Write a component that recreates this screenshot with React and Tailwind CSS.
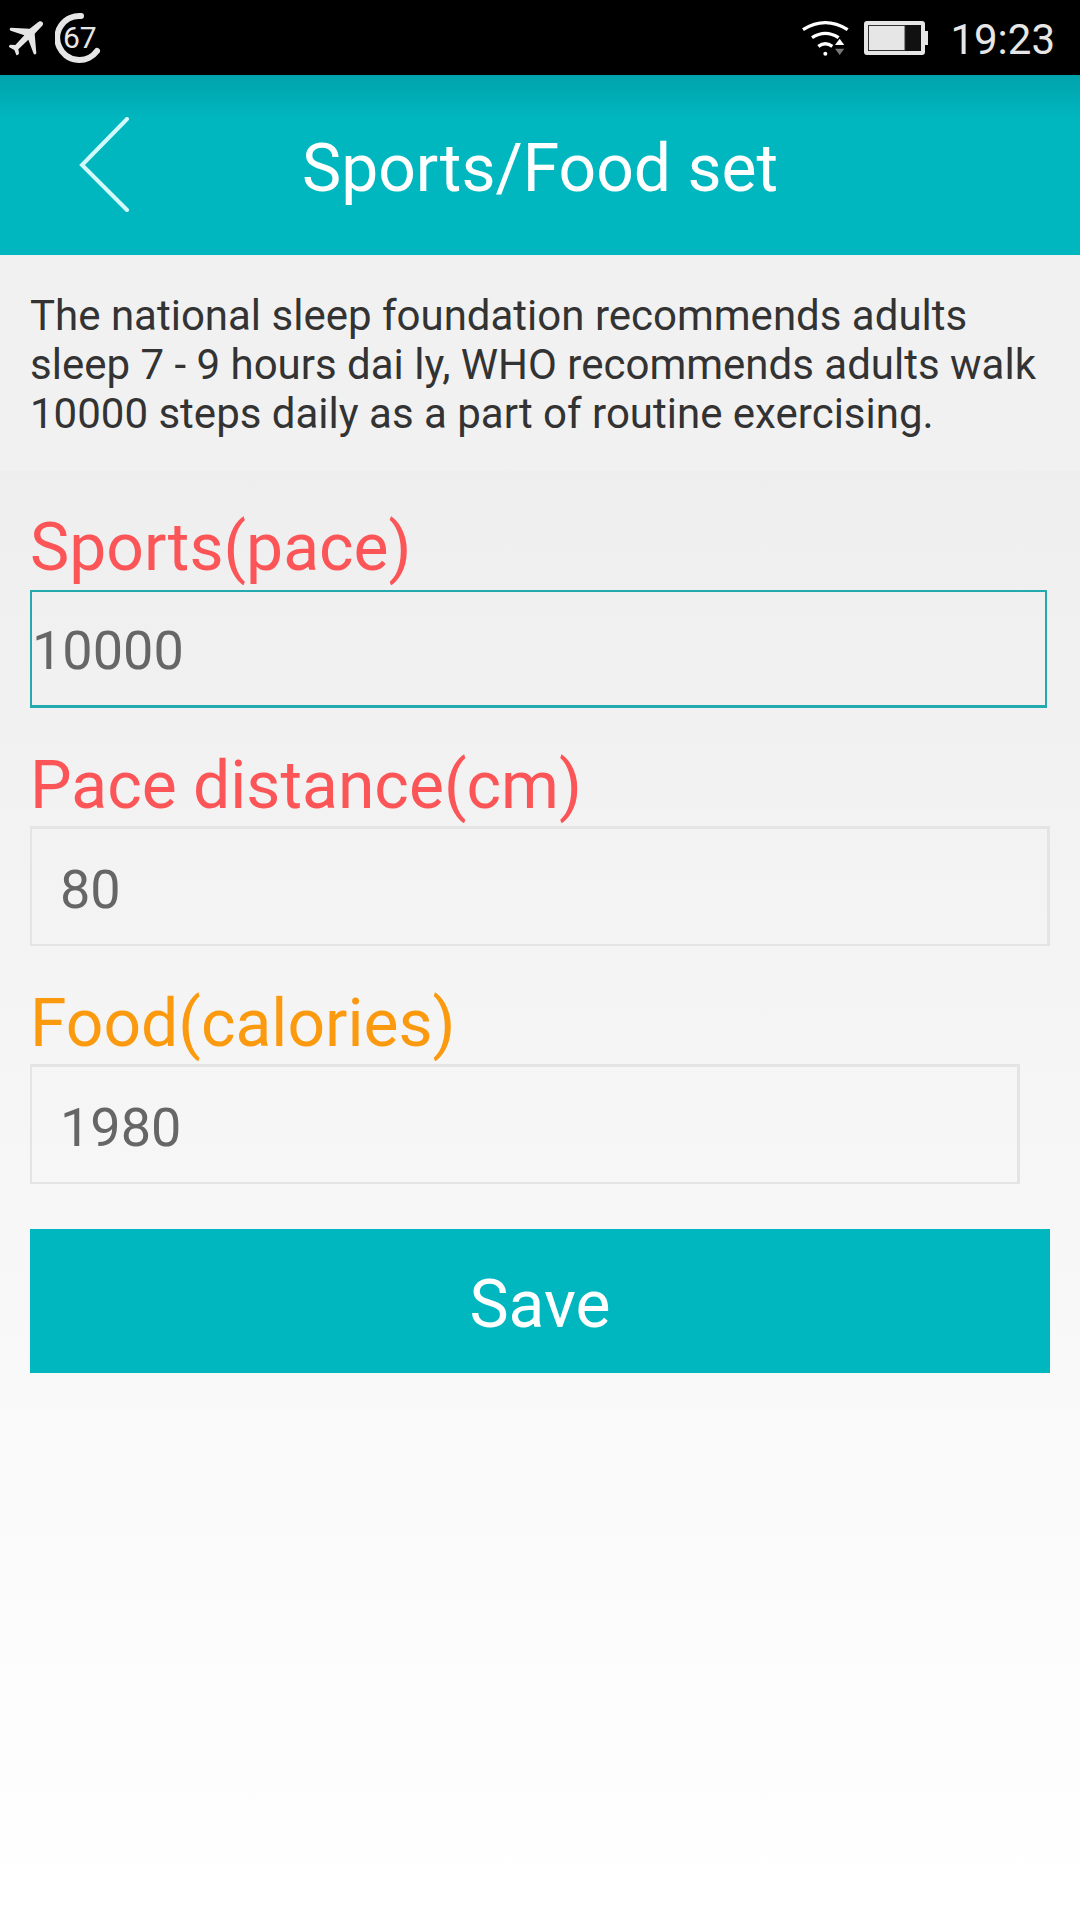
import React from "react";

function StatusBar() {
  return (
    <div className="flex h-[75px] items-center justify-between bg-black pl-2 pr-[25px] text-[#e6e6e6]">
      <div className="flex h-full items-center">
        <svg viewBox="0 0 108 108" className="mr-[11px] h-9 w-9" fill="currentColor" aria-label="Airplane mode">
          <path d="M103 6c4 4 2 9-1 12L80 41l5 58c0 4-6 6-8 2L61 59 31 88l2 12c0 3-6 7-8 5l-6-15L4 82c-3-2 0-7 3-8l15 1 27-29L8 32c-4-2-4-8 1-9l56 3L90 7c3-3 9-5 13-1z" />
        </svg>
        <div className="relative h-[52px] w-[46px]">
          <svg viewBox="0 0 46 52" className="h-full w-full" fill="none" stroke="currentColor" strokeWidth="6" strokeLinecap="round" aria-hidden="true">
            <path d="M26 4A22 22 0 1 0 42 39" />
          </svg>
          <span className="absolute left-2 top-2.5 text-[30px] leading-8">67</span>
        </div>
      </div>
      <div className="flex h-full items-center">
        <svg viewBox="0 0 144 108" className="mr-[15px] h-9 w-12" fill="none" stroke="#fff" aria-label="Wi-Fi">
          <path d="M6 29Q73-13 140 29" strokeWidth="10" />
          <path d="M33 53Q73 27 113 53" strokeWidth="10" />
          <path d="M52 79Q73 63 94 79" strokeWidth="10" />
          <circle cx="73" cy="101" r="6" fill="#fff" stroke="none" />
          <path d="M102 75h28L116 56z" fill="#fff" stroke="none" />
          <path d="M102 86h28L116 105z" fill="#777" stroke="none" />
        </svg>
        <svg viewBox="0 0 64 34" className="mr-[22px] h-[34px] w-16" aria-label="Battery">
          <path d="M60 10h4v14h-4z" fill="currentColor" />
          <rect x="2" y="2" width="57" height="30" rx="1" fill="#111" stroke="currentColor" strokeWidth="4" />
          <path d="M5 5h36v24H5z" fill="currentColor" />
          <path d="M4.500 4.500h36.500v25h-36.500z" fill="none" stroke="#333" />
        </svg>
        <time className="pt-1 text-[42px] leading-[48px]">19:23</time>
      </div>
    </div>
  );
}

function Field({ id, label, value, labelClass, inputClass, wrapClass }) {
  return (
    <div className="pb-10">
      <label htmlFor={id} className={"block h-[78px] text-[66px] leading-[76px] " + labelClass}>
        {label}
      </label>
      <div className={"flex h-[120px] items-end " + wrapClass}>
        <input
          id={id}
          type="text"
          inputMode="numeric"
          defaultValue={value}
          className={"w-full bg-transparent text-[54px] text-[#666] outline-none " + inputClass}
        />
      </div>
    </div>
  );
}

export default function App() {
  return (
    <div className="flex min-h-screen flex-col bg-white font-['Roboto',sans-serif]">
      <StatusBar />
      <header className="grid h-[180px] grid-cols-[1fr_auto_1fr] items-center bg-[#00b7c0] bg-linear-to-b from-[#00a3ac] via-[#00b7c0] via-25% to-[#00b7c0] text-white">
        <button type="button" aria-label="Back" className="ml-[78px] flex h-24 w-14 items-center">
          <svg viewBox="0 0 56 96" className="h-24 w-14" fill="none" stroke="#d4fbfc" strokeWidth="4" strokeLinecap="round">
            <path d="M49 2 4 48l45 45" />
          </svg>
        </button>
        <h1 className="pt-2 text-[66px] leading-[78px]">Sports/Food set</h1>
      </header>
      <main className="flex flex-1 flex-col bg-linear-to-b from-[#ececec] to-white">
        <p className="h-[215px] bg-[#f1f1f1] px-[30px] pt-9 text-[42px] leading-[49px] text-[#333]">
          The national sleep foundation recommends adults sleep 7 - 9 hours dai ly, WHO recommends adults walk 10000
          steps daily as a part of routine exercising.
        </p>
        <form className="px-[30px] pt-10" onSubmit={(e) => e.preventDefault()}>
          <Field
            id="sports"
            label="Sports(pace)"
            value="10000"
            labelClass="text-[#fb5558]"
            wrapClass="pr-[3px]"
            inputClass="h-[118px] border-2 border-b-3 border-[#22aaae] px-0 pt-1"
          />
          <Field
            id="pace"
            label="Pace distance(cm)"
            value="80"
            labelClass="text-[#fb5558]"
            wrapClass=""
            inputClass="h-[120px] border-2 border-t-3 border-r-3 border-[#e4e4e4] px-7 pt-1.5"
          />
          <Field
            id="food"
            label="Food(calories)"
            value="1980"
            labelClass="text-[#fb990f]"
            wrapClass="pr-[30px]"
            inputClass="h-[120px] border-2 border-t-3 border-r-3 border-[#e4e4e4] px-7 pt-1.5"
          />
          <button type="submit" className="mt-[5px] h-36 w-full bg-[#00b7c0] pt-2 text-[66px] leading-[78px] text-white">
            Save
          </button>
        </form>
      </main>
    </div>
  );
}
